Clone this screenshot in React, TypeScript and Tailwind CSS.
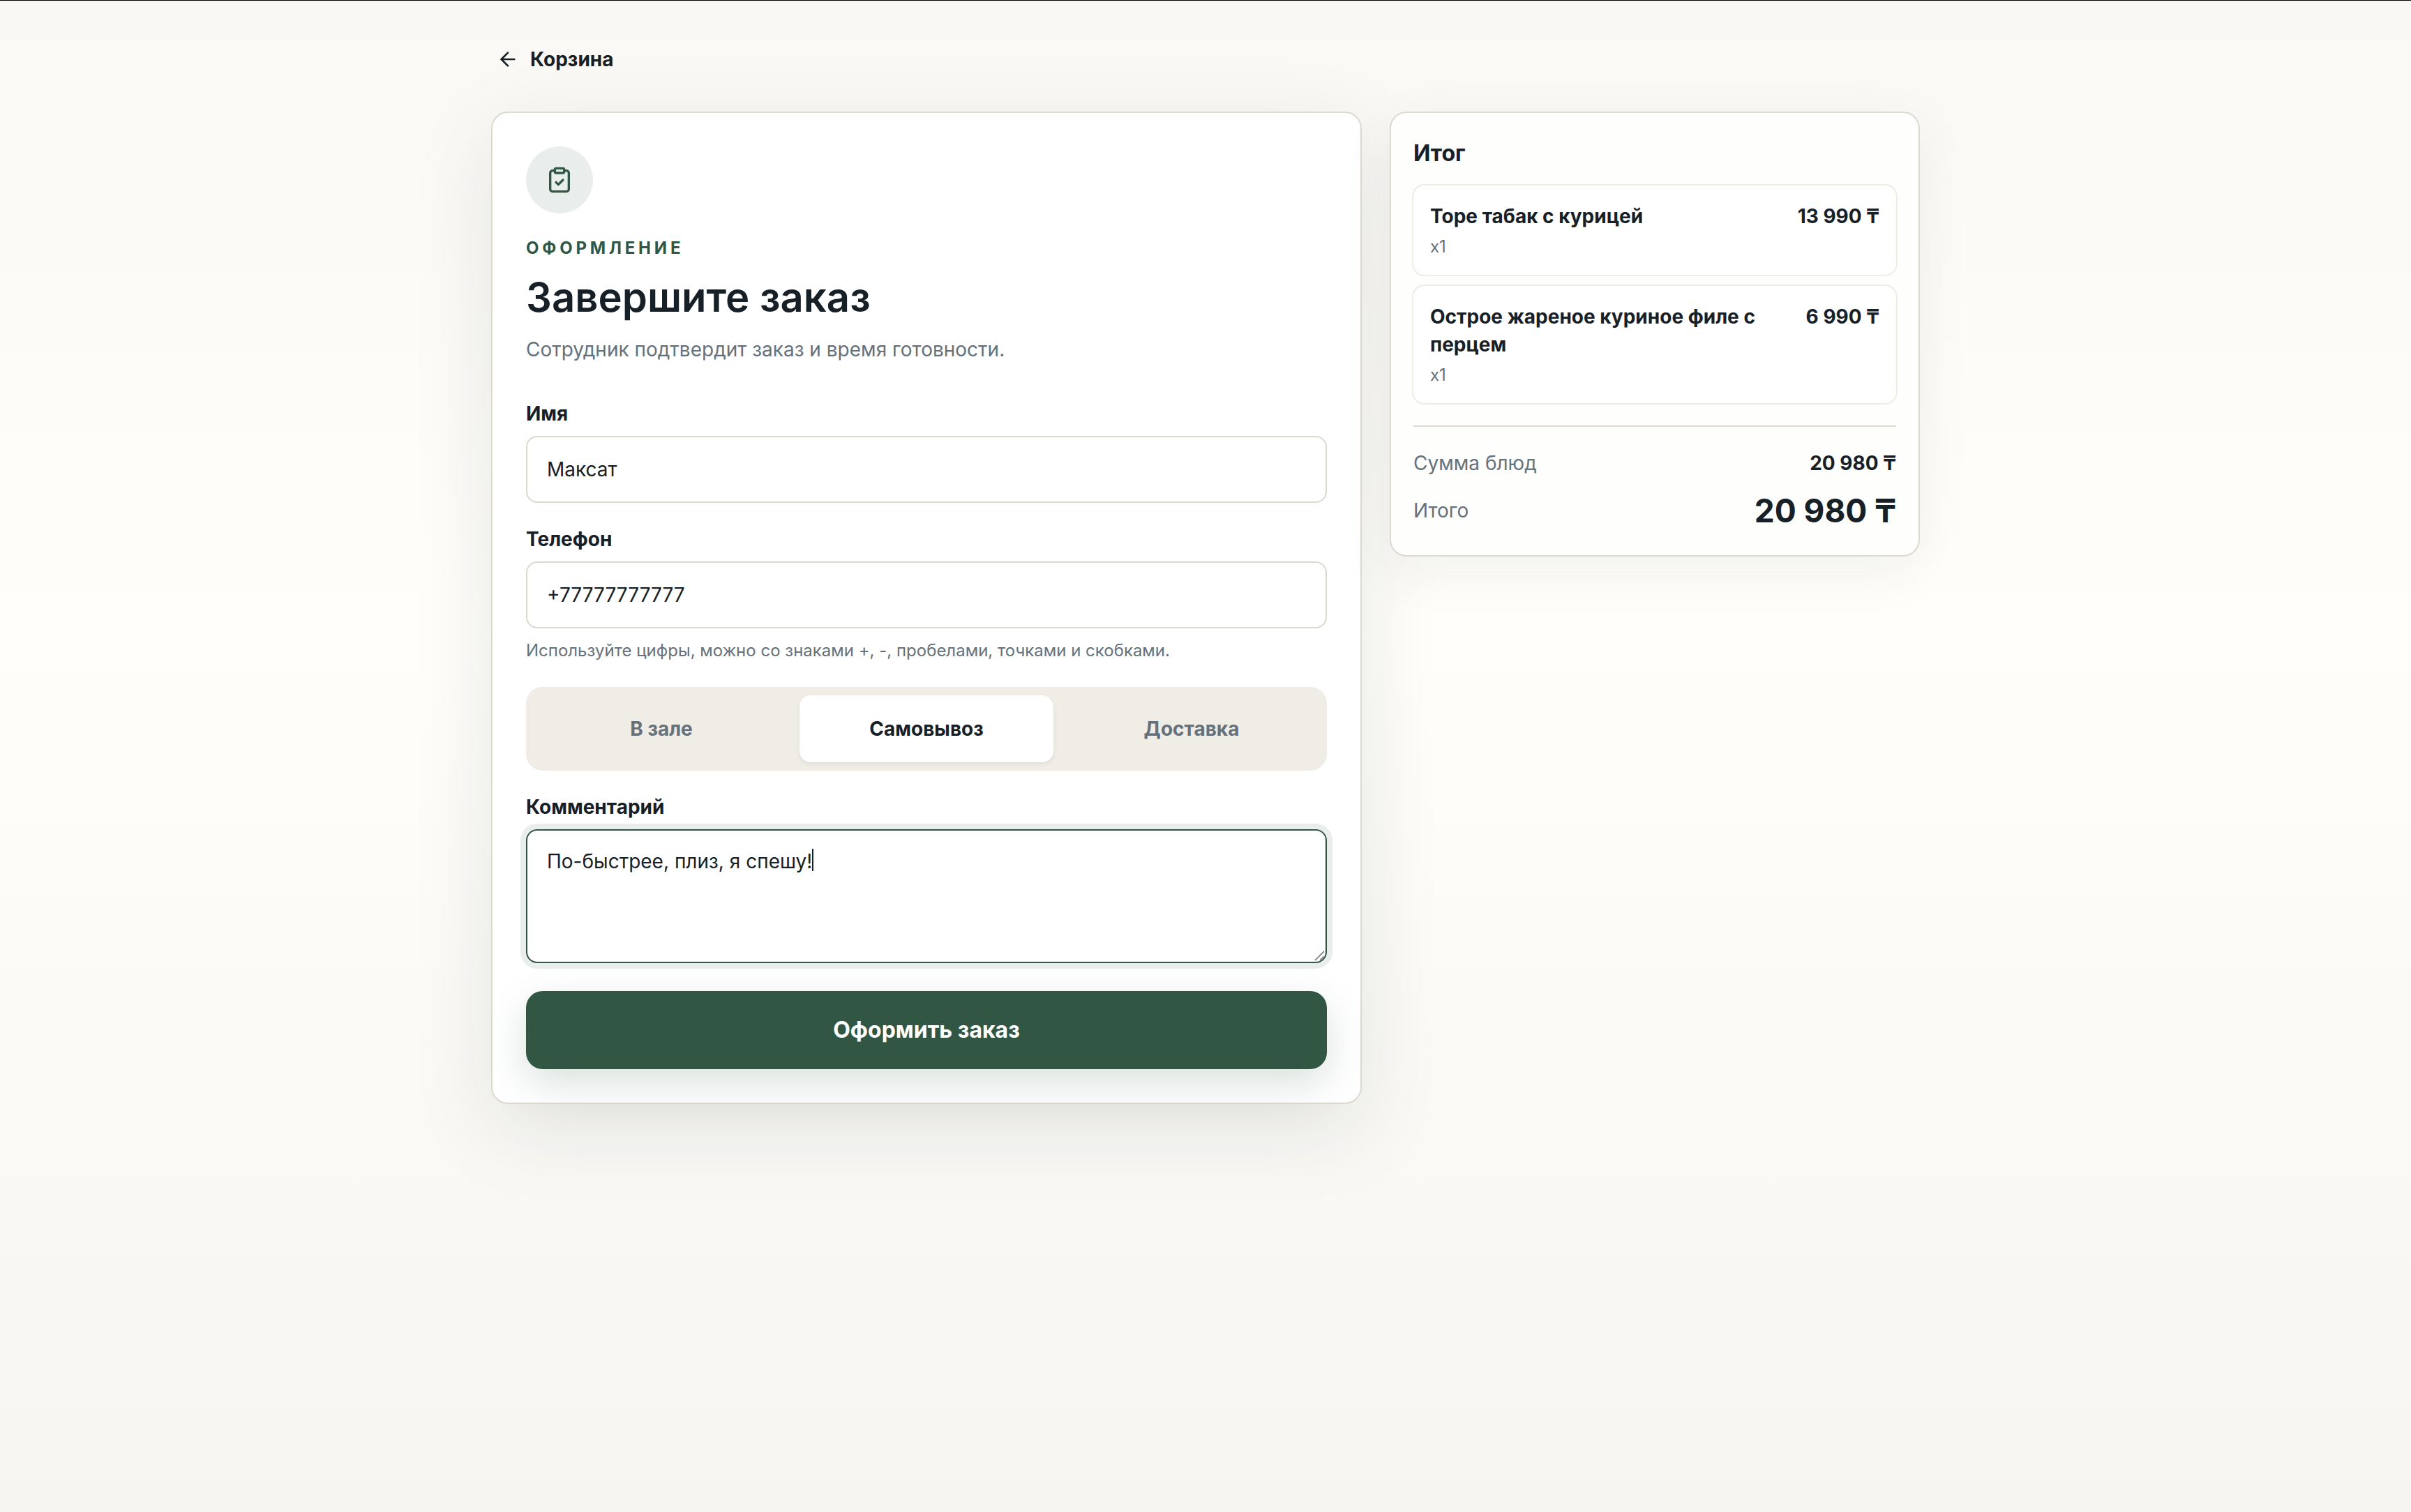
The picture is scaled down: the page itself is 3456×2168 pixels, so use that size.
import { useEffect, useRef, useState } from "react";
import { ArrowLeft, ClipboardCheck } from "lucide-react";

const items = [
  { name: "Торе табак с курицей", qty: 1, price: "13 990 ₸" },
  { name: "Острое жареное куриное филе с перцем", qty: 1, price: "6 990 ₸" },
];

const modes = ["В зале", "Самовывоз", "Доставка"];

const fieldClass =
  "block w-full rounded-2xl border-2 border-[#ddd9d0] bg-white px-7 text-[28px] leading-10 text-[#172026] outline-none focus:border-[#315744] focus:ring-8 focus:ring-[#e9eeec]";

function OrderForm() {
  const [mode, setMode] = useState("Самовывоз");
  const comment = useRef<HTMLTextAreaElement>(null);

  useEffect(() => {
    const el = comment.current;
    if (el) {
      el.focus();
      el.setSelectionRange(el.value.length, el.value.length);
    }
  }, []);

  return (
    <form
      onSubmit={(e) => e.preventDefault()}
      className="rounded-3xl border-2 border-[#ddd9d0] bg-white p-12 shadow-[0_36px_120px_rgba(23,32,38,0.10)]"
    >
      <div className="flex size-24 items-center justify-center rounded-full bg-[#e9eeec] text-[#315744]">
        <ClipboardCheck size={40} />
      </div>
      <p className="mt-8 text-2xl leading-9 font-bold tracking-[0.2em] text-[#315744] uppercase">Оформление</p>
      <h1 className="mt-4 text-[58px] leading-[72px] font-semibold">Завершите заказ</h1>
      <p className="mt-[15px] text-[28px] leading-12 text-[#65717b]">Сотрудник подтвердит заказ и время готовности.</p>

      <div className="mt-12">
        <label htmlFor="name" className="block text-[28px] leading-10 font-bold">
          Имя
        </label>
        <input id="name" defaultValue="Максат" className={`${fieldClass} mt-3 h-24`} />
      </div>

      <div className="mt-8">
        <label htmlFor="phone" className="block text-[28px] leading-10 font-bold">
          Телефон
        </label>
        <input id="phone" type="tel" defaultValue="+77777777777" className={`${fieldClass} mt-3 h-24`} />
        <p className="mt-4 text-2xl text-[#65717b]">
          Используйте цифры, можно со знаками +, -, пробелами, точками и скобками.
        </p>
      </div>

      <div className="mt-9 grid grid-cols-3 gap-4 rounded-3xl bg-[#f0ece6] p-3">
        {modes.map((m) => (
          <button
            key={m}
            type="button"
            aria-pressed={m === mode}
            onClick={() => setMode(m)}
            className={`h-24 rounded-2xl text-[28px] font-bold ${
              m === mode ? "bg-white text-[#172026] shadow-[0_2px_6px_rgba(0,0,0,0.08)]" : "text-[#65717b]"
            }`}
          >
            {m}
          </button>
        ))}
      </div>

      <div className="mt-8">
        <label htmlFor="comment" className="block text-[28px] leading-10 font-bold">
          Комментарий
        </label>
        <div className="relative mt-3">
          <textarea
            id="comment"
            ref={comment}
            defaultValue="По-быстрее, плиз, я спешу!"
            className={`${fieldClass} h-48 resize-none py-6 caret-transparent`}
          />
          <span className="pointer-events-none absolute top-7 left-[410px] h-8 w-0.5 bg-[#172026]" />
          <svg
            viewBox="0 0 16 16"
            className="pointer-events-none absolute right-[2px] bottom-[2px] size-4"
            fill="none"
            stroke="#6b6b6b"
            strokeWidth="1.5"
          >
            <path d="M1 14 14 1M8 14l5.5-5.5" />
          </svg>
        </div>
      </div>

      <button
        type="submit"
        className="mt-10 h-28 w-full rounded-3xl bg-[#315744] text-[32px] font-bold text-white shadow-[0_20px_56px_rgba(49,87,68,0.18)]"
      >
        Оформить заказ
      </button>
    </form>
  );
}

function Summary() {
  return (
    <aside className="rounded-3xl border-2 border-[#ddd9d0] bg-[#fefefd] p-8 shadow-[0_20px_80px_rgba(23,32,38,0.06)]">
      <h2 className="text-[32px] leading-13 font-bold">Итог</h2>
      <ul className="mt-5 flex flex-col gap-4">
        {items.map((item) => (
          <li key={item.name} className="flex justify-between gap-6 rounded-2xl bg-white p-6 ring-2 ring-[#f0ece6]">
            <div>
              <p className="text-[28px] leading-10 font-bold">{item.name}</p>
              <p className="mt-2 text-2xl text-[#65717b]">x{item.qty}</p>
            </div>
            <p className="text-[28px] leading-10 font-bold whitespace-nowrap">{item.price}</p>
          </li>
        ))}
      </ul>
      <dl className="mt-8 border-t-2 border-[#ddd9d0] pt-8">
        <div className="flex items-center justify-between">
          <dt className="text-[28px] leading-10 text-[#65717b]">Сумма блюд</dt>
          <dd className="text-[28px] leading-10 font-bold">20 980 ₸</dd>
        </div>
        <div className="mt-4 flex items-center justify-between">
          <dt className="text-[28px] leading-10 text-[#65717b]">Итого</dt>
          <dd className="text-[46px] leading-16 font-bold">20 980 ₸</dd>
        </div>
      </dl>
    </aside>
  );
}

export default function App() {
  return (
    <div className="min-h-screen border-t border-black bg-linear-to-b from-[#faf8f4] via-[#fffefb] via-42% to-[#f6f5f1] font-['Inter',sans-serif] text-[#172026]">
      <main className="mx-auto max-w-[2048px] pt-10">
        <a href="#cart" className="inline-flex h-[87px] items-center gap-4 px-2 text-[28px] font-bold">
          <ArrowLeft size={32} />
          Корзина
        </a>
        <div className="mt-8 grid grid-cols-[minmax(0,1fr)_760px] items-start gap-10">
          <OrderForm />
          <Summary />
        </div>
      </main>
    </div>
  );
}
